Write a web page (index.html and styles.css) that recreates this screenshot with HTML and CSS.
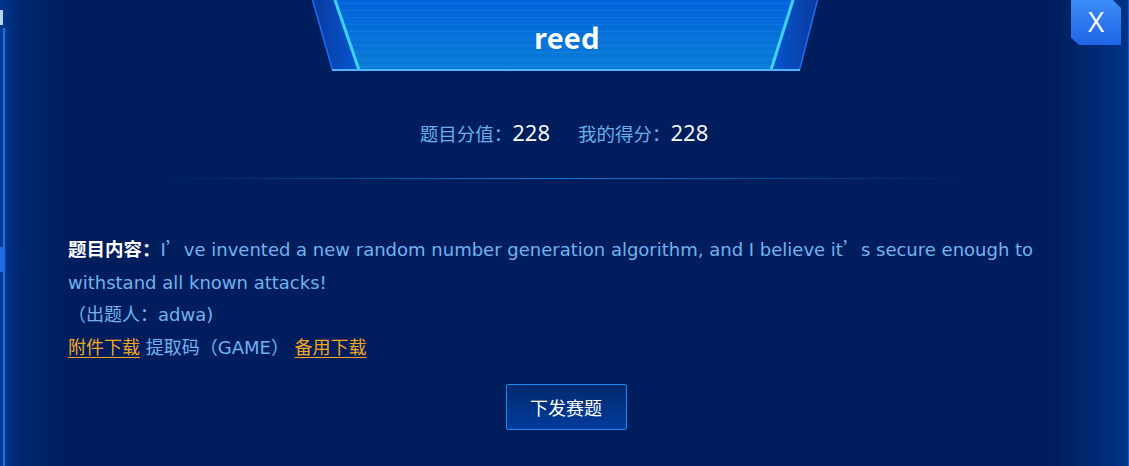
FILE: index.html
```html
<!DOCTYPE html>
<html lang="zh">
<head>
<meta charset="utf-8">
<link rel="stylesheet" href="styles.css">
</head>
<body>
<div class="dialog">
  <div class="edge-left"></div>
  <header class="title-bar">
    <svg class="title-bg" width="510" height="72" viewBox="0 0 510 72">
      <defs>
        <linearGradient id="fill" x1="0" y1="0" x2="0" y2="1">
          <stop offset="0" stop-color="#0062dc"/>
          <stop offset="1" stop-color="#0a7ed6"/>
        </linearGradient>
        <pattern id="stripes" width="10" height="7" patternUnits="userSpaceOnUse">
          <rect width="10" height="1" y="3" fill="rgba(120,190,255,0.12)"/>
        </pattern>
        <linearGradient id="glow" x1="0" y1="0" x2="1" y2="0">
          <stop offset="0" stop-color="#0a3aa0"/>
          <stop offset="1" stop-color="#0656d0"/>
        </linearGradient>
        <linearGradient id="glowR" x1="1" y1="0" x2="0" y2="0">
          <stop offset="0" stop-color="#0a3aa0"/>
          <stop offset="1" stop-color="#0656d0"/>
        </linearGradient>
      </defs>
      <polygon points="0,0 22,0 46,70 20,70" fill="url(#glow)"/>
      <polygon points="505,0 482,0 460,70 488,70" fill="url(#glowR)"/>
      <line x1="0.5" y1="0" x2="20.5" y2="70" stroke="#1a6ff0" stroke-width="1.5"/>
      <line x1="505.5" y1="0" x2="487.5" y2="70" stroke="#1a6ff0" stroke-width="1.5"/>
      <polygon points="22,0 482,0 460,70 46,70" fill="url(#fill)"/>
      <polygon points="22,0 482,0 460,70 46,70" fill="url(#stripes)"/>
      <line x1="23" y1="0" x2="47" y2="70" stroke="#3fd2f4" stroke-width="3"/>
      <line x1="481" y1="0" x2="459" y2="70" stroke="#3fd2f4" stroke-width="3"/>
      <rect x="20" y="69" width="468" height="2" fill="#4fb4ff"/>
    </svg>
    <h1 class="title">reed</h1>
  </header>
  <button class="close" type="button">X</button>

  <div class="scores">
    <span class="score"><span class="label">题目分值：</span><span class="value">228</span></span>
    <span class="score"><span class="label">我的得分：</span><span class="value">228</span></span>
  </div>
  <div class="divider"></div>

  <div class="content">
    <p class="desc"><span class="desc-label">题目内容：</span>I<span class="fw">’</span>ve invented a new random number generation algorithm, and I believe it<span class="fw">’</span>s secure enough to withstand all known attacks!</p>
    <p class="author">（出题人：adwa)</p>
    <p class="links"><a class="link" href="#">附件下载</a> 提取码（GAME） <a class="link" href="#">备用下载</a></p>
  </div>
  <div class="actions">
    <button class="submit" type="button">下发赛题</button>
  </div>
</div>
</body>
</html>
```
FILE: styles.css
```css
html, body {
  margin: 0;
  padding: 0;
  background: #001e5e;
}
body {
  font-family: "DejaVu Sans", "Noto Sans CJK SC", sans-serif;
  width: 1129px;
  height: 466px;
  overflow: hidden;
}
.dialog {
  position: relative;
  width: 1129px;
  height: 466px;
  box-sizing: border-box;
  background:
    linear-gradient(to right, rgba(0,60,150,0.85) 0px, rgba(0,48,130,0.5) 20px, rgba(0,30,94,0) 62px),
    linear-gradient(to left, #003488 0px, #002a74 30px, #001e5e 75px, #001e5e 100%);
  border-right: 1px solid #0a5ad8;
}
.edge-left {
  position: absolute;
  left: 3px;
  top: 28px;
  width: 2px;
  height: 438px;
  background: #1a6fd8;
  box-shadow: 0 0 3px rgba(40,130,255,0.6);
}
.edge-left::before {
  content: "";
  position: absolute;
  left: -3px;
  top: -18px;
  width: 3px;
  height: 15px;
  background: #b8d4f4;
}
.edge-left::after {
  content: "";
  position: absolute;
  left: -3px;
  top: 219px;
  width: 3px;
  height: 25px;
  background: #1e6ae8;
}
.title-bar {
  position: relative;
  width: 510px;
  height: 72px;
  margin: 0 auto;
  left: 3px;
  display: flex;
  align-items: center;
  justify-content: center;
}
.title-bg {
  position: absolute;
  left: 0;
  top: 0;
}
.title {
  position: relative;
  margin: 0;
  color: #ffffff;
  font-family: "Noto Sans CJK SC", sans-serif;
  font-size: 29px;
  font-weight: 700;
  letter-spacing: 0.3px;
}
.close {
  position: absolute;
  right: 7px;
  top: 0;
  width: 50px;
  height: 45px;
  border: none;
  padding: 0 0 4px 0;
  background: linear-gradient(to bottom, #3a8cf6, #1f64e6);
  clip-path: polygon(0 0, 84% 0, 100% 18%, 100% 100%, 16% 100%, 0 84%);
  color: #ffffff;
  font-family: "Open Sans", sans-serif;
  font-size: 28px;
  font-weight: 400;
  line-height: 1;
}
.scores {
  display: flex;
  justify-content: center;
  gap: 28px;
  margin-top: 43px;
  height: 34px;
  align-items: center;
}
.score { display: flex; align-items: baseline; }
.label {
  color: #6aaeee;
  font-family: "Noto Sans CJK SC", sans-serif;
  font-size: 18.5px;
}
.value {
  color: #ffffff;
  font-family: "Open Sans", sans-serif;
  font-size: 22px;
}
.divider {
  width: 800px;
  height: 1px;
  margin: 29px auto 0;
  background: linear-gradient(to right, rgba(10,120,220,0), #0a7ad8 50%, rgba(10,120,220,0));
}
.content {
  padding: 53px 60px 0 68px;
}
.content p {
  margin: 0;
  font-size: 18px;
  line-height: 32.7px;
  color: #72b2ef;
}
.fw {
  font-family: "Noto Sans CJK SC", sans-serif;
}
.desc-label {
  color: #ffffff;
  font-family: "Noto Sans CJK SC", sans-serif;
  font-size: 18.5px;
  font-weight: 700;
}
.content .links, .content .author {
  font-size: 18px;
}
.link {
  color: #f2a61e;
  text-decoration: underline;
  text-underline-offset: 3px;
}
.actions {
  display: flex;
  justify-content: center;
  margin-top: 19px;
  padding-left: 4px;
}
.submit {
  width: 121px;
  height: 46px;
  border: 1px solid #1e8af0;
  border-radius: 2px;
  background: linear-gradient(to bottom, #002a6e, #003c9c);
  color: #ffffff;
  font-family: "Noto Sans CJK SC", sans-serif;
  font-size: 18px;
}
```
